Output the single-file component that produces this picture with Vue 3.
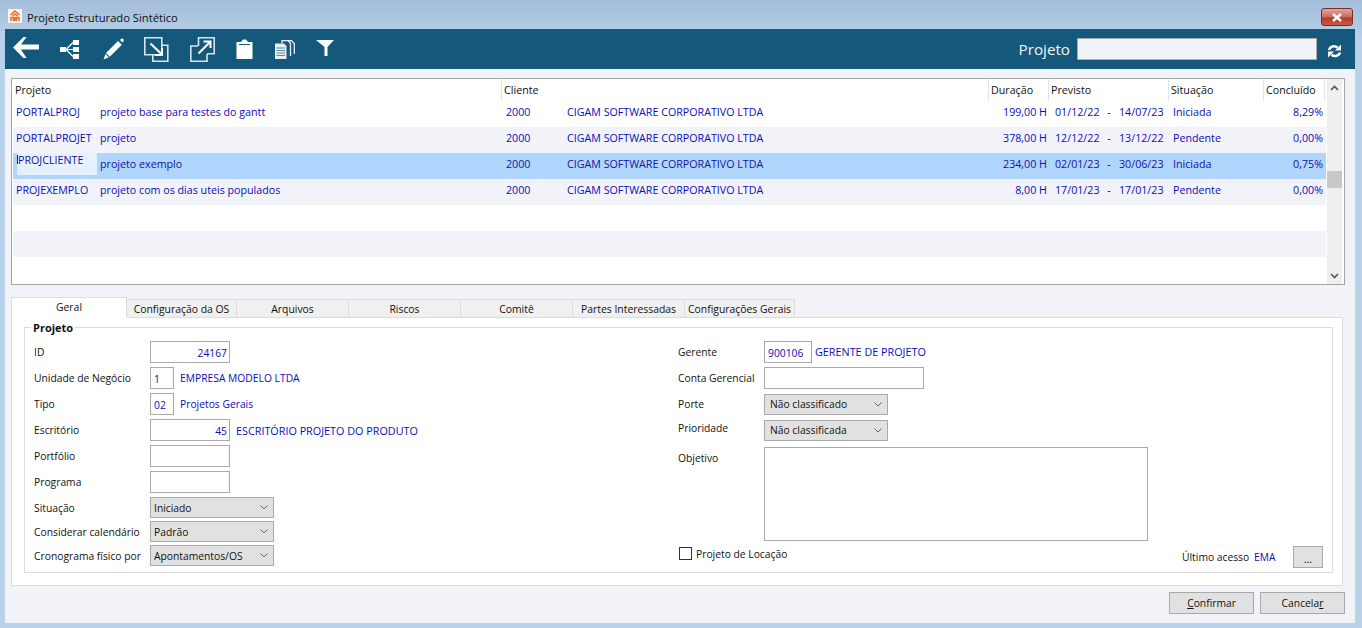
<script setup>
const rows = [
  { code: 'PORTALPROJ', desc: 'projeto base para testes do gantt', dur: '199,00 H', a: '01/12/22', b: '14/07/23', sit: 'Iniciada', pct: '8,29%' },
  { code: 'PORTALPROJET', desc: 'projeto', dur: '378,00 H', a: '12/12/22', b: '13/12/22', sit: 'Pendente', pct: '0,00%' },
  { code: 'PROJCLIENTE', desc: 'projeto exemplo', dur: '234,00 H', a: '02/01/23', b: '30/06/23', sit: 'Iniciada', pct: '0,75%', sel: true },
  { code: 'PROJEXEMPLO', desc: 'projeto com os dias uteis populados', dur: '8,00 H', a: '17/01/23', b: '17/01/23', sit: 'Pendente', pct: '0,00%' }
]
const heads = [
  ['Projeto', 489], ['Cliente', 487], ['Duração', 60], ['Previsto', 120], ['Situação', 95], ['Concluído', 61]
]
const tabs = ['Geral', 'Configuração da OS', 'Arquivos', 'Riscos', 'Comitê', 'Partes Interessadas', 'Configurações Gerais']
</script>

<template>
  <div class="window">
    <header class="title">
      <svg class="logo" width="14" height="14" viewBox="0 0 14 14">
        <rect width="14" height="14" fill="#fdf3ec" />
        <path d="M2.500 6 7 2l4.500 4M4.500 7 7 5l2.500 2M3 12V8.500h2.500V12M8.500 12V8.500H11V12M6 11.500l2-3M6 8.500l2 3" fill="none" stroke="#ec6a24" stroke-width="1.500" />
      </svg>
      <span>Projeto Estruturado Sintético</span>
      <button class="close" aria-label="Fechar">
        <svg width="12" height="9" viewBox="0 0 12 9"><path d="M2 1l8 7M10 1 2 8" stroke="#fff" stroke-width="2.400" /></svg>
      </button>
    </header>

    <main class="body">
      <div class="toolbar">
        <svg class="i-back" width="26" height="21" viewBox="0 0 26 21"><path d="M10.500 0h3L8 7.500h18v5H8l5.500 8.500h-3L0 10.500z" fill="#fff" /></svg>
        <svg class="i-tree" width="19" height="19" viewBox="0 0 19 19" fill="#fff"><rect x="0" y="7" width="6" height="5" /><rect x="13" y="0" width="6" height="5" /><rect x="13" y="7" width="6" height="5" /><rect x="13" y="14" width="6" height="5" /><path d="M5 9h9v1H5z" /><path d="M6 9.500 13 2.500M6 9.500l7 7" stroke="#fff" stroke-width="1.200" /></svg>
        <svg class="i-pen" width="22" height="23" viewBox="0 0 22 23" fill="#fff"><path d="M15 4l3.800 3.800L6.800 19.800 3 16z" /><path d="M17 3c1-1.500 2-2 3-1.200s1 2 0 3l-.6.700zM2.500 17l3.300 3.300L.500 22.500z" /></svg>
        <svg class="i-imp" width="25" height="25" viewBox="0 0 25 25" fill="none" stroke="#d9e3ea" stroke-width="1.600"><path d="M.800.800h17v17H.800zM8.800 17.800v6.400h15v-16h-6" /><path d="M6.500 6.500 17.500 17M18 11v7h-7" stroke="#fff" stroke-width="2" /></svg>
        <svg class="i-exp" width="25" height="25" viewBox="0 0 25 25" fill="none" stroke="#d9e3ea" stroke-width="1.600"><path d="M8 9H.800v15.200H17V17M8.500 9V.800h15.700v16H17" /><path d="M8.500 16.500 20 5M13.500 4.500H20.500V11" stroke="#fff" stroke-width="2" /></svg>
        <svg class="i-clip" width="17" height="20" viewBox="0 0 17 20" fill="#fff"><path d="M.500 3h4.500L7 .500h3L12 3h4.500v17H.500z" /><path d="M3 5.500h11" stroke="#14597c" /></svg>
        <svg class="i-copy" width="20" height="19" viewBox="0 0 20 19" fill="none" stroke="#e8eef2" stroke-width="1.300"><path d="M7 3V.700h6l2.500 2.500V16M12 .700h4.500L19.300 3.500V14" /><path d="M0 3.500h9l2.500 2.500v13H0z" fill="#e8eef2" stroke="none" /><path d="M1.500 8h8.500M1.500 10.500h8.500M1.500 13h8.500M1.500 15.500h8.500" stroke="#5f8aa1" stroke-width="1" /></svg>
        <svg class="i-filter" width="18" height="16" viewBox="0 0 18 16"><path d="M0 0h18l-6.500 7v9h-3V7z" fill="#fff" /></svg>
        <span class="tb-label">Projeto</span>
        <input class="tb-input" type="text" aria-label="Projeto" />
        <svg class="i-sync" width="15" height="14" viewBox="0 0 15 14"><path d="M2 6C3 2.500 7.500 1 10.500 3.500" fill="none" stroke="#fff" stroke-width="2.600" /><path d="M14 .500V6.500H8z" fill="#fff" /><path d="M13 8.500c-1 3.500-5.500 4.500-8.500 2.200" fill="none" stroke="#fff" stroke-width="2.600" /><path d="M1 13.500V7.500h6z" fill="#fff" /></svg>
      </div>

      <section class="grid">
        <div class="grid-main">
          <div class="head">
            <div v-for="h in heads" :key="h[0]" class="hcell" :style="{ width: h[1] + 'px' }">{{ h[0] }}</div>
          </div>
          <div v-for="r in rows" :key="r.code" class="row" :class="{ sel: r.sel }">
            <div class="c-code"><span :class="{ editing: r.sel }">{{ r.code }}</span></div>
            <div>{{ r.desc }}</div>
            <div>2000</div>
            <div>CIGAM SOFTWARE CORPORATIVO LTDA</div>
            <div class="num dur">{{ r.dur }}</div>
            <div class="dates"><span class="num">{{ r.a }}</span><span class="dash">-</span><span class="num">{{ r.b }}</span></div>
            <div>{{ r.sit }}</div>
            <div class="num">{{ r.pct }}</div>
          </div>
          <div class="row"></div>
          <div class="row alt"></div>
          <div class="row"></div>
        </div>
        <div class="scroll">
          <svg width="9" height="6" viewBox="0 0 9 6"><path d="M1 5l3.500-3.500L8 5" fill="none" stroke="#555" stroke-width="1.600" /></svg>
          <div class="thumb"></div>
          <svg width="9" height="6" viewBox="0 0 9 6"><path d="M1 1l3.500 3.500L8 1" fill="none" stroke="#555" stroke-width="1.600" /></svg>
        </div>
      </section>

      <nav class="tabs">
        <div v-for="(t, i) in tabs" :key="t" class="tab" :class="['t' + i, { active: i === 0 }]">{{ t }}</div>
      </nav>

      <section class="panel">
        <div class="group">
          <div class="legend">Projeto</div>
          <div class="col left">
            <div class="field"><label>ID</label><input class="inp w80 right" value="24167" readonly /></div>
            <div class="field"><label>Unidade de Negócio</label><input class="inp w24" value="1" readonly /><span class="link">EMPRESA MODELO LTDA</span></div>
            <div class="field"><label>Tipo</label><input class="inp w24" value="02" readonly /><span class="link">Projetos Gerais</span></div>
            <div class="field"><label>Escritório</label><input class="inp w80 right" value="45" readonly /><span class="link wide">ESCRITÓRIO PROJETO DO PRODUTO</span></div>
            <div class="field"><label>Portfólio</label><input class="inp w80" readonly /></div>
            <div class="field"><label>Programa</label><input class="inp w80" readonly /></div>
            <div class="field sf"><label>Situação</label><div class="sel-box"><span>Iniciado</span><svg width="8" height="5" viewBox="0 0 8 5"><path d="M.500.500 4 4 7.500.500" fill="none" stroke="#666" /></svg></div></div>
            <div class="field sf"><label>Considerar calendário</label><div class="sel-box"><span>Padrão</span><svg width="8" height="5" viewBox="0 0 8 5"><path d="M.500.500 4 4 7.500.500" fill="none" stroke="#666" /></svg></div></div>
            <div class="field sf"><label>Cronograma físico por</label><div class="sel-box"><span>Apontamentos/OS</span><svg width="8" height="5" viewBox="0 0 8 5"><path d="M.500.500 4 4 7.500.500" fill="none" stroke="#666" /></svg></div></div>
          </div>
          <div class="col rightcol">
            <div class="field"><label>Gerente</label><input class="inp w48" value="900106" readonly /><span class="link short wide">GERENTE DE PROJETO</span></div>
            <div class="field"><label>Conta Gerencial</label><input class="inp w160" readonly /></div>
            <div class="field"><label>Porte</label><div class="sel-box narrow"><span>Não classificado</span><svg width="8" height="5" viewBox="0 0 8 5"><path d="M.500.500 4 4 7.500.500" fill="none" stroke="#666" /></svg></div></div>
            <div class="field"><label class="pri">Prioridade</label><div class="sel-box narrow"><span>Não classificada</span><svg width="8" height="5" viewBox="0 0 8 5"><path d="M.500.500 4 4 7.500.500" fill="none" stroke="#666" /></svg></div></div>
            <div class="field area"><label>Objetivo</label><textarea class="inp obj" readonly></textarea></div>
            <div class="bottom">
              <span class="check"></span><span class="chk-label">Projeto de Locação</span>
              <span class="acc">Último acesso</span><span class="ema">EMA</span>
              <button class="more">...</button>
            </div>
          </div>
        </div>
      </section>

      <div class="actions">
        <button class="btn"><u>C</u>onfirmar</button>
        <button class="btn">Cancela<u>r</u></button>
      </div>
    </main>
  </div>
</template>

<style scoped>
.window {
  width: 1362px;
  height: 628px;
  box-sizing: border-box;
  padding: 0 7px 5px 5px;
  background: linear-gradient(#a3bdd9, #b9d2ea 40px);
  display: flex;
  flex-direction: column;
  font: 10.7px "Open Sans", "Noto Sans", sans-serif;
  color: #111;
  overflow: hidden;
}
.title {
  height: 29px;
  flex: none;
  display: flex;
  align-items: center;
  gap: 5px;
  padding-left: 3px;
  font-size: 11.200px;
  color: #111;
}
.logo { flex: none; margin-top: 3px; }
.title span { margin-top: 6px; }
.close {
  margin-left: auto;
  margin-right: 2px;
  margin-top: 5px;
  width: 32px;
  height: 18px;
  padding: 0;
  border: 1px solid #7a2c2c;
  border-radius: 3px;
  background: linear-gradient(#e0a59c, #cc6a5c 50%, #b53a2c 55%, #c85a48);
  display: flex;
  align-items: center;
  justify-content: center;
}
.body {
  flex: 1;
  min-height: 0;
  background: #f1f3f9;
  display: flex;
  flex-direction: column;
}
.toolbar {
  flex: none;
  height: 40px;
  background: #14597c;
  display: flex;
  align-items: center;
  padding-left: 8px;
  color: #f2f4f8;
}
.toolbar svg { flex: none; }
.i-back { margin-top: -3px; }
.i-tree { margin-left: 21px; }
.i-pen { margin-left: 24px; margin-top: -1px; }
.i-imp { margin-left: 19px; margin-top: 1px; }
.i-exp { margin-left: 21px; margin-top: 1px; }
.i-clip { margin-left: 21px; }
.i-copy { margin-left: 22px; }
.i-filter { margin-left: 21px; margin-top: -2px; }
.tb-label { margin-left: auto; font-size: 15.200px; }
.tb-input {
  width: 240px;
  height: 22px;
  box-sizing: border-box;
  margin-left: 7px;
  border: 1px solid #a9a9a9;
  background: #f1f3f9;
}
.i-sync { margin: 3px 13px 0 10px; }
.grid {
  flex: none;
  height: 207px;
  margin: 9px 10px 0 6px;
  box-sizing: border-box;
  border: 1px solid #a5a5a5;
  background: #fff;
  display: flex;
  color: #0c0cb8;
}
.grid-main { width: 1314px; padding-left: 1px; box-sizing: border-box; }
.head {
  height: 22px;
  display: flex;
  color: #111;
}
.hcell {
  box-sizing: border-box;
  padding: 3px 0 0 2px;
  line-height: 16px;
  border-right: 1px solid #e4e4e4;
  white-space: nowrap;
}
.row {
  height: 26px;
  box-sizing: border-box;
  padding-bottom: 5px;
  display: grid;
  grid-template-columns: 87px 406px 61px 423px 65px 118px 92px 58px;
  align-items: center;
  background: #fff;
  white-space: nowrap;
}
.row:nth-of-type(odd) { background: #f2f3f9; }
.row.alt { background: #f2f3f9; }
.row.sel { background: #b0d6fd; color: #14149c; padding-bottom: 4px; }
.c-code { padding-left: 3px; height: 100%; display: flex; align-items: center; }
.editing {
  align-self: flex-start;
  position: relative;
  width: 80px;
  height: 22px;
  margin-left: 1px;
  padding-left: 1px;
  box-sizing: border-box;
  line-height: 14px;
  background: #e6f1fe;
}
.editing::before {
  content: "";
  position: absolute;
  left: 0;
  top: 2px;
  width: 1px;
  height: 9px;
  background: #222;
}
.num { text-align: right; }
.dur { padding-right: 8px; }
.dates { display: grid; grid-template-columns: 44px 20px 44px; }
.dash { text-align: center; color: #111; }
.scroll {
  width: 15px;
  margin: 0 0 0 1px;
  background: #efefef;
  position: relative;
  display: flex;
  flex-direction: column;
  align-items: center;
  justify-content: space-between;
  padding: 6px 0 5px;
}
.thumb {
  position: absolute;
  left: 0;
  top: 92px;
  width: 15px;
  height: 17px;
  background: #c8c8c8;
}
.tabs {
  flex: none;
  height: 21px;
  margin: 12px 0 -1px 6px;
  display: flex;
  align-items: flex-end;
  position: relative;
  z-index: 1;
  font-size: 10.400px;
}
.tab {
  box-sizing: border-box;
  height: 19px;
  line-height: 18px;
  text-align: center;
  background: #f0f0f0;
  border: 1px solid #dcdcdc;
  border-left: 0;
  white-space: nowrap;
}
.t0 { width: 116px; }
.t1 { width: 110px; }
.t2, .t3, .t4, .t5 { width: 112px; }
.t6 { width: 110px; }
.tab.active {
  height: 21px;
  line-height: 19px;
  background: #fff;
  border-left: 1px solid #dcdcdc;
  border-bottom-color: #fff;
}
.panel {
  flex: none;
  height: 269px;
  margin: 0 12px 0 6px;
  box-sizing: border-box;
  background: #fff;
  border: 1px solid #dcdcdc;
  padding: 9px 9px 12px 12px;
  display: flex;
}
.group {
  flex: 1;
  min-width: 0;
  box-sizing: border-box;
  border: 1px solid #dcdcdc;
  position: relative;
  display: flex;
  padding: 13px 9px 0 9px;
  font-size: 10.300px;
}
.legend {
  position: absolute;
  left: 6px;
  top: -7px;
  padding: 0 2px 0 2px;
  background: #fff;
  font-size: 11px;
  font-weight: 700;
  line-height: 14px;
}
.col { display: flex; flex-direction: column; }
.left { width: 644px; flex: none; }
.rightcol { flex: 1; min-width: 0; }
.field {
  display: flex;
  align-items: center;
  height: 22px;
  margin-bottom: 4px;
  white-space: nowrap;
}
.field.sf { height: 21px; margin-bottom: 3px; }
.field label { width: 116px; flex: none; }
.rightcol .field label { width: 86px; }
.rightcol .field label.pri { padding-bottom: 4px; }
.inp {
  box-sizing: border-box;
  height: 22px;
  border: 1px solid #a9a9a9;
  background: #fff;
  color: #0c0cb8;
  font: inherit;
  padding: 1px 2px 0 3px;
  outline: none;
}
.w80 { width: 80px; }
.w24 { width: 24px; }
.w48 { width: 48px; }
.w160 { width: 160px; }
.right { text-align: right; }
.link { margin-left: 6px; color: #0c0cb8; }
.link.wide { font-size: 10.800px; }
.link.short { margin-left: 3px; padding-bottom: 2px; }
.sel-box {
  box-sizing: border-box;
  width: 124px;
  height: 100%;
  border: 1px solid #a9a9a9;
  background: #e1e1e1;
  display: flex;
  align-items: center;
  justify-content: space-between;
  padding: 0 5px 0 3px;
}
.sel-box.narrow { padding-left: 5px; height: 21px; }
.field.area { height: 94px; align-items: flex-start; margin-top: 2px; margin-bottom: 0; }
.field.area label { margin-top: 4px; }
.obj { width: 384px; height: 94px; resize: none; }
.bottom {
  display: flex;
  align-items: center;
  height: 22px;
  margin-top: 5px;
  white-space: nowrap;
}
.check {
  width: 13px;
  height: 13px;
  flex: none;
  box-sizing: border-box;
  margin: -7px 0 0 1px;
  border: 1px solid #333;
  background: #fff;
}
.chk-label { margin: -6px 0 0 4px; }
.acc { margin-left: auto; width: 72px; }
.ema { width: 39px; color: #0c0cb8; }
.more {
  box-sizing: border-box;
  width: 30px;
  height: 22px;
  flex: none;
  border: 1px solid #a9a9a9;
  background: #e1e1e1;
  font: inherit;
  padding: 3px 0 0;
}
.actions {
  flex: none;
  display: flex;
  justify-content: flex-end;
  gap: 6px;
  margin: 6px 10px 0 0;
}
.btn {
  box-sizing: border-box;
  width: 85px;
  height: 22px;
  border: 1px solid #a9a9a9;
  background: #e1e1e1;
  font: inherit;
  font-size: 10.300px;
  color: #111;
  padding: 0;
}
</style>
<style>
html, body { margin: 0; overflow: hidden; }
</style>
